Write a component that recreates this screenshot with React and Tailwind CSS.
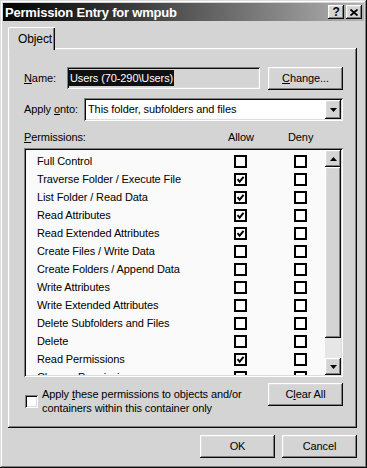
import React from "react";

const raised =
  "shadow-[inset_-1px_-1px_#0a0a0a,inset_1px_1px_#ffffff,inset_-2px_-2px_#808080,inset_2px_2px_#dcdcdc]";
const sunken =
  "shadow-[inset_1px_1px_#808080,inset_-1px_-1px_#ffffff,inset_2px_2px_#0a0a0a,inset_-2px_-2px_#dcdcdc]";

const permissions = [
  ["Full Control", false],
  ["Traverse Folder / Execute File", true],
  ["List Folder / Read Data", true],
  ["Read Attributes", true],
  ["Read Extended Attributes", true],
  ["Create Files / Write Data", false],
  ["Create Folders / Append Data", false],
  ["Write Attributes", false],
  ["Write Extended Attributes", false],
  ["Delete Subfolders and Files", false],
  ["Delete", false],
  ["Read Permissions", true],
  ["Change Permissions", false],
];

const FlatBox = ({ checked }) => (
  <div className="w-[13px] h-[13px] border-2 border-black bg-white flex items-center justify-center">
    {checked && (
      <svg width="9" height="9" viewBox="0 0 9 9">
        <path d="M1.5 4.2 L3.6 6.6 L7.6 1.8" fill="none" stroke="#000" strokeWidth="2" />
      </svg>
    )}
  </div>
);

const Arrow = ({ up }) => (
  <svg width="7" height="4" viewBox="0 0 7 4">
    <path d={up ? "M0 4 L3.5 0 L7 4 Z" : "M0 0 L7 0 L3.5 4 Z"} fill="#000" />
  </svg>
);

const Button = ({ children, className = "" }) => (
  <div className={`w-[75px] h-[23px] bg-[#d4d4d4] flex items-center justify-center ${raised} ${className}`}>
    {children}
  </div>
);

export default function App() {
  return (
    <div className="w-[367px] h-[468px] bg-[#d4d4d4] p-[3px] flex flex-col font-['Liberation_Sans',Arial,sans-serif] text-[11px] tracking-[-0.1px] text-black leading-none shadow-[inset_-1px_-1px_#0a0a0a,inset_1px_1px_#dcdcdc,inset_-2px_-2px_#808080,inset_2px_2px_#ffffff]">
      {/* title bar */}
      <div className="h-[18px] bg-linear-to-r from-[#050505] via-[#555555] to-[#b4b4b4] flex items-center pl-[2px] pr-[2px]">
        <span className="text-white font-bold text-[13px] tracking-[-0.2px]">Permission Entry for wmpub</span>
        <div className="ml-auto flex gap-[2px]">
          <div className={`w-[16px] h-[14px] bg-[#d4d4d4] flex items-center justify-center font-bold text-[12px] ${raised}`}>?</div>
          <div className={`w-[16px] h-[14px] bg-[#d4d4d4] flex items-center justify-center ${raised}`}>
            <svg width="8" height="7" viewBox="0 0 8 7">
              <path d="M0.5 0.5 L7.5 6.5 M7.5 0.5 L0.5 6.5" stroke="#000" strokeWidth="1.8" />
            </svg>
          </div>
        </div>
      </div>

      <div className="pl-[5px] pt-[6px] flex flex-col">
        {/* tab */}
        <div className="relative z-10 w-[47px] h-[23px] -mb-[2px] bg-[#d4d4d4] border-l border-t border-white rounded-tl-[2px] shadow-[inset_-1px_0_#0a0a0a,inset_-2px_0_#808080] flex items-center pl-[9px] text-[12px]">
          Object
        </div>

        {/* panel */}
        <div className={`w-[349px] h-[380px] bg-[#d4d4d4] flex flex-col pl-[16px] pt-[19px] ${raised}`}>
          <div className="flex items-center h-[22px]">
            <span className="w-[43px]">
              <span className="underline">N</span>ame:
            </span>
            <div className={`w-[193px] h-[22px] flex items-center pl-[2px] ${sunken}`}>
              <span className="bg-[#101010] text-white px-[1px] h-[16px] flex items-center">Users (70-290\Users)</span>
            </div>
            <Button className="ml-[8px] h-[22px]">
              <span><span className="underline">C</span>hange...</span>
            </Button>
          </div>

          <div className="flex items-center h-[23px] mt-[9px]">
            <span className="w-[60px] whitespace-nowrap">
              Apply <span className="underline">o</span>nto:
            </span>
            <div className={`w-[259px] h-[23px] bg-white flex items-center pl-[4px] pr-[2px] ${sunken}`}>
              <span className="flex-1">This folder, subfolders and files</span>
              <div className={`w-[16px] h-[19px] bg-[#d4d4d4] flex items-center justify-center ${raised}`}>
                <Arrow />
              </div>
            </div>
          </div>

          <div className="flex h-[18px] mt-[9px] pt-[2px]">
            <span className="w-[204px]">
              <span className="underline">P</span>ermissions:
            </span>
            <span className="w-[60px]">Allow</span>
            <span>Deny</span>
          </div>

          <div className={`w-[319px] h-[229px] bg-[#fafafa] p-[2px] flex ${sunken}`}>
            <div className="flex-1 overflow-hidden pt-[2px]">
              {permissions.map(([name, allow]) => (
                <div key={name} className="h-[18px] flex items-center">
                  <span className="w-[208px] pl-[11px] whitespace-nowrap">{name}</span>
                  <FlatBox checked={allow} />
                  <div className="w-[47px]" />
                  <FlatBox checked={false} />
                </div>
              ))}
            </div>
            <div className="w-[16px] flex flex-col">
              <div className={`h-[17px] bg-[#d4d4d4] flex items-center justify-center ${raised}`}>
                <Arrow up />
              </div>
              <div className={`h-[171px] bg-[#d4d4d4] ${raised}`} />
              <div className="flex-1 bg-[#e6e6e6]" />
              <div className={`h-[17px] bg-[#d4d4d4] flex items-center justify-center ${raised}`}>
                <Arrow />
              </div>
            </div>
          </div>

          <div className="flex mt-[6px] w-[319px]">
            <div className="flex pt-[4px]">
              <div className={`w-[13px] h-[13px] mt-[8px] ml-[1px] bg-white ${sunken}`} />
              <div className="ml-[4px] leading-[14px]">
                <div>
                  Apply <span className="underline">t</span>hese permissions to objects and/or
                </div>
                <div>containers within this container only</div>
              </div>
            </div>
            <Button className="ml-auto h-[22px]">
              <span>C<span className="underline">l</span>ear All</span>
            </Button>
          </div>
        </div>

        {/* dialog buttons */}
        <div className="flex w-[349px] justify-end gap-[7px] mt-[7px]">
          <Button>OK</Button>
          <Button>Cancel</Button>
        </div>
      </div>
    </div>
  );
}
